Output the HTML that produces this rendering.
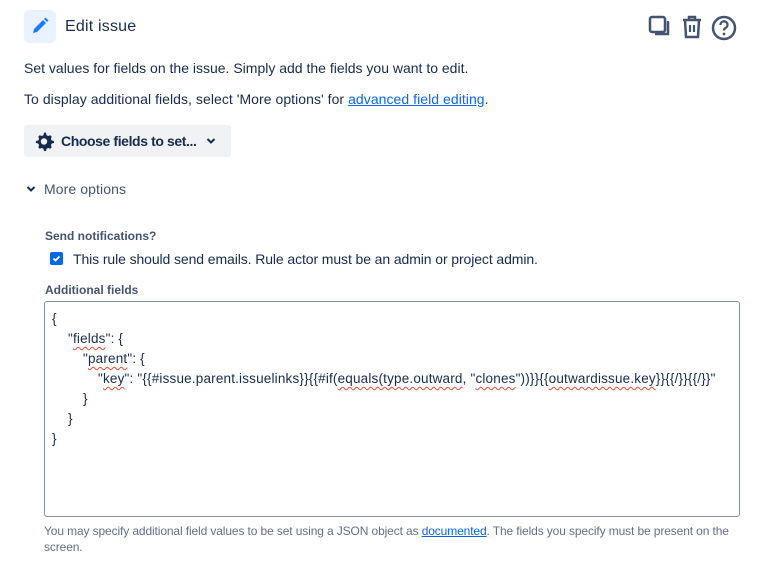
<!DOCTYPE html>
<html><head><meta charset="utf-8"><style>
*{margin:0;padding:0;box-sizing:border-box}
body{width:760px;height:568px;background:#fff;font-family:"Liberation Sans",sans-serif;color:#172b4d;position:relative;overflow:hidden}
.a{position:absolute;white-space:nowrap}
a{color:#0c66e4;text-decoration:underline}
.sq{text-decoration:underline wavy #e34935;text-decoration-thickness:1px;text-underline-offset:3px}
</style></head><body>
<div class="a" style="left:24px;top:10px;width:32px;height:33px;background:#e9f2ff;border-radius:6px"></div>
<svg class="a" style="left:30px;top:16px" width="20" height="20" viewBox="0 0 20 20"><path d="M3 17l1-4 9-9 3 3-9 9z" fill="#1d7afc"/><path d="M14 3l1.5-1.5 3 3L17 6z" fill="#1d7afc"/></svg>
<div class="a" style="left:65px;top:18px;font-size:16px;font-weight:500;color:#172b4d;letter-spacing:0.2px">Edit issue</div>
<svg class="a" style="left:648px;top:15px" width="26" height="24" viewBox="0 0 26 24"><rect x="2" y="2" width="15" height="15" rx="2" fill="none" stroke="#44546f" stroke-width="2.5"/><path d="M20 6v13H7" fill="none" stroke="#44546f" stroke-width="2.5"/></svg>
<svg class="a" style="left:680px;top:14px" width="24" height="26" viewBox="0 0 24 26"><path d="M3 6h18M9 6V3h6v3M5 6l1 17h12l1-17" fill="none" stroke="#44546f" stroke-width="2.5"/><path d="M10 11v7M14 11v7" stroke="#44546f" stroke-width="2.2"/></svg>
<svg class="a" style="left:711px;top:15px" width="26" height="26" viewBox="0 0 26 26"><circle cx="13" cy="13" r="11" fill="none" stroke="#44546f" stroke-width="2.5"/><path d="M9.5 10a3.5 3.5 0 1 1 5 3c-1 .6-1.5 1.2-1.5 2.5" fill="none" stroke="#44546f" stroke-width="2.3"/><circle cx="13" cy="19" r="1.4" fill="#44546f"/></svg>
<div class="a" style="left:24px;top:60px;font-size:14px;letter-spacing:0px">Set values for fields on the issue. Simply add the fields you want to edit.</div>
<div class="a" style="left:24px;top:91px;font-size:14px;letter-spacing:0.05px">To display additional fields, select 'More options' for <a>advanced field editing</a>.</div>
<div class="a" style="left:24px;top:125px;width:207px;height:32px;background:#f1f2f4;border-radius:3px"></div>
<svg class="a" style="left:34px;top:131px" width="20" height="20" viewBox="0 0 20 20"><path d="M10 1.5l2 .3.5 2.3 1.6.9 2.2-.8 1.4 1.5-.8 2.2.9 1.6 2.3.5v2l-2.3.5-.9 1.6.8 2.2-1.4 1.5-2.2-.8-1.6.9-.5 2.3h-2l-.5-2.3-1.6-.9-2.2.8-1.4-1.5.8-2.2-.9-1.6-2.3-.5v-2l2.3-.5.9-1.6-.8-2.2 1.4-1.5 2.2.8 1.6-.9.5-2.3z" fill="#172b4d"/><circle cx="10" cy="10.5" r="3.2" fill="#f1f2f4"/></svg>
<div class="a" style="left:61px;top:133px;font-size:14px;font-weight:bold;color:#172b4d;letter-spacing:-0.4px">Choose fields to set...</div>
<svg class="a" style="left:206px;top:137px" width="10" height="8" viewBox="0 0 10 8"><path d="M1.5 2l3.5 3.5L8.5 2" fill="none" stroke="#172b4d" stroke-width="2"/></svg>
<svg class="a" style="left:26px;top:185px" width="10" height="8" viewBox="0 0 10 8"><path d="M1.5 2l3.5 3.5L8.5 2" fill="none" stroke="#172b4d" stroke-width="2"/></svg>
<div class="a" style="left:44px;top:181px;font-size:14px;color:#44546f;letter-spacing:0.1px">More options</div>
<div class="a" style="left:45px;top:229px;font-size:12px;font-weight:bold;color:#44546f">Send notifications?</div>
<div class="a" style="left:50px;top:252px;width:13px;height:13px;background:#0c66e4;border-radius:2px"></div>
<svg class="a" style="left:50px;top:252px" width="13" height="13" viewBox="0 0 13 13"><path d="M3.5 6.5l2 2 4-4" fill="none" stroke="#fff" stroke-width="1.8"/></svg>
<div class="a" style="left:73px;top:251px;font-size:14px;letter-spacing:-0.1px">This rule should send emails. Rule actor must be an admin or project admin.</div>
<div class="a" style="left:45px;top:283px;font-size:12px;font-weight:bold;color:#44546f">Additional fields</div>
<div class="a" style="left:44px;top:301px;width:696px;height:216px;border:1px solid #8590a2;border-radius:3px"></div>
<div class="a" style="left:52px;top:309px;font-size:13.5px;line-height:20px;color:#172b4d;letter-spacing:0.18px">
<div>{</div>
<div style="padding-left:16px">"<span class="sq">fields</span>": {</div>
<div style="padding-left:31px">"<span class="sq">parent</span>": {</div>
<div style="padding-left:46px">"<span class="sq">key</span>": "{{#issue.parent.issuelinks}}{{#if(<span class="sq">equals(type.outward</span>, "<span class="sq">clones</span>"))}}{{<span class="sq">outwardissue.key</span>}}{{/}}{{/}}"</div>
<div style="padding-left:31px">}</div>
<div style="padding-left:16px">}</div>
<div>}</div>
</div>
<div class="a" style="left:44px;top:523px;font-size:12px;line-height:16px;color:#626f86;letter-spacing:-0.12px;white-space:normal;width:700px">You may specify additional field values to be set using a JSON object as <a>documented</a>. The fields you specify must be present on the screen.</div>
</body></html>
